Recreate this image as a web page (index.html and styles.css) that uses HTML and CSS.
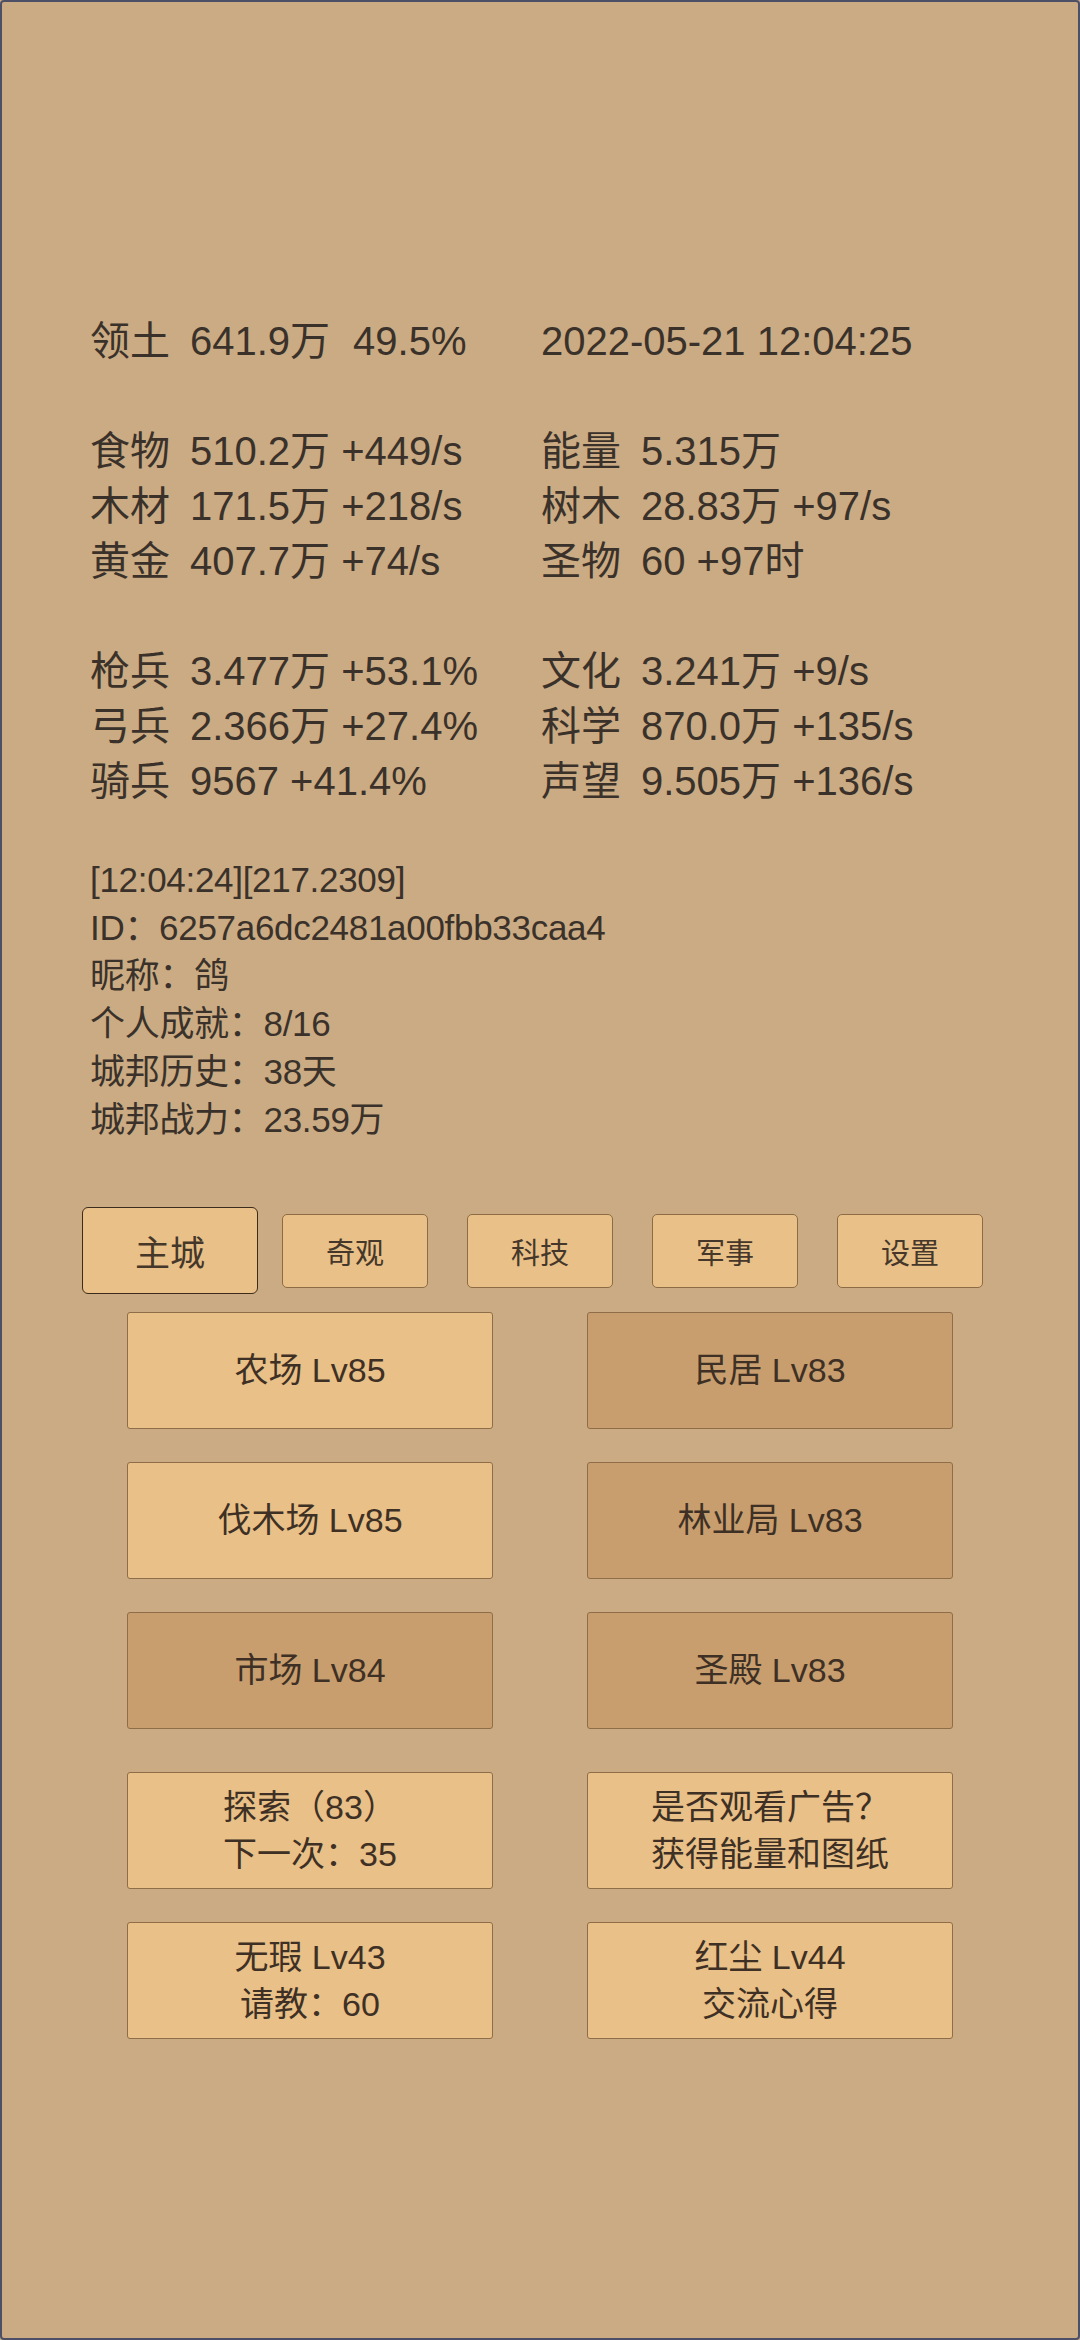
FILE: index.html
```html
<!DOCTYPE html>
<html lang="zh-CN">
<head>
    <meta charset="UTF-8">
    <meta name="viewport" content="width=device-width, initial-scale=1.0">
    <title>城邦</title>
    <link rel="stylesheet" href="styles.css">
</head>
<body>
    <div class="screen">
        <div class="stats">
            <div class="stats-group">
                <div class="stat"><span class="label">领土</span>641.9万<span class="gap"></span>49.5%</div>
                <div class="stat">2022-05-21 12:04:25</div>
            </div>
            <div class="stats-group">
                <div class="stat"><span class="label">食物</span>510.2万 +449/s</div>
                <div class="stat"><span class="label">能量</span>5.315万</div>
                <div class="stat"><span class="label">木材</span>171.5万 +218/s</div>
                <div class="stat"><span class="label">树木</span>28.83万 +97/s</div>
                <div class="stat"><span class="label">黄金</span>407.7万 +74/s</div>
                <div class="stat"><span class="label">圣物</span>60 +97时</div>
            </div>
            <div class="stats-group">
                <div class="stat"><span class="label">枪兵</span>3.477万 +53.1%</div>
                <div class="stat"><span class="label">文化</span>3.241万 +9/s</div>
                <div class="stat"><span class="label">弓兵</span>2.366万 +27.4%</div>
                <div class="stat"><span class="label">科学</span>870.0万 +135/s</div>
                <div class="stat"><span class="label">骑兵</span>9567 +41.4%</div>
                <div class="stat"><span class="label">声望</span>9.505万 +136/s</div>
            </div>
        </div>

        <div class="info">
            <div>[12:04:24][217.2309]</div>
            <div>ID：6257a6dc2481a00fbb33caa4</div>
            <div>昵称：鸽</div>
            <div>个人成就：8/16</div>
            <div>城邦历史：38天</div>
            <div>城邦战力：23.59万</div>
        </div>

        <div class="tabs">
            <div class="tab-cell"><button class="tab active">主城</button></div>
            <div class="tab-cell"><button class="tab">奇观</button></div>
            <div class="tab-cell"><button class="tab">科技</button></div>
            <div class="tab-cell"><button class="tab">军事</button></div>
            <div class="tab-cell"><button class="tab">设置</button></div>
        </div>

        <div class="buildings">
            <button class="btn">农场 Lv85</button>
            <button class="btn dark">民居 Lv83</button>
            <button class="btn">伐木场 Lv85</button>
            <button class="btn dark">林业局 Lv83</button>
            <button class="btn dark">市场 Lv84</button>
            <button class="btn dark">圣殿 Lv83</button>
        </div>

        <div class="buildings extra">
            <button class="btn">探索（83）<br>下一次：35</button>
            <button class="btn">是否观看广告？<br>获得能量和图纸</button>
            <button class="btn">无瑕 Lv43<br>请教：60</button>
            <button class="btn">红尘 Lv44<br>交流心得</button>
        </div>
    </div>
</body>
</html>
```

FILE: styles.css
```css
html, body {
    margin: 0;
    padding: 0;
}
body {
    background-color: #cbab83;
    font-family: "Liberation Sans", "Noto Sans CJK SC", sans-serif;
    color: #3a322a;
}
.screen {
    box-sizing: border-box;
    width: 1080px;
    height: 2340px;
    border: 2px solid #4c4f66;
    border-radius: 4px;
    padding-top: 312px;
}
.stats {
    padding-left: 88px;
    font-size: 40px;
}
.stats-group {
    display: grid;
    grid-template-columns: 451px auto;
    line-height: 55px;
}
.stats-group + .stats-group {
    margin-top: 55px;
}
.stat {
    white-space: nowrap;
}
.label {
    display: inline-block;
    width: 80px;
    margin-right: 20px;
}
.gap {
    display: inline-block;
    width: 23px;
}
.info {
    margin-top: 47px;
    padding-left: 88px;
    font-size: 35px;
    line-height: 48px;
    letter-spacing: -0.3px;
}
.tabs {
    margin-top: 63px;
    display: grid;
    grid-template-columns: repeat(5, 185px);
    justify-content: center;
    height: 87px;
}
.tab-cell {
    display: flex;
    align-items: center;
    justify-content: center;
}
.tab {
    width: 146px;
    height: 74px;
    padding: 0;
    font-family: inherit;
    font-size: 29px;
    color: #45372a;
    background-color: #e9c087;
    border: 1px solid #8c6b45;
    border-radius: 5px;
}
.tab.active {
    width: 176px;
    height: 87px;
    font-size: 35px;
    border-color: #3b2c1e;
    border-radius: 6px;
}
.buildings {
    margin-top: 18px;
    display: grid;
    grid-template-columns: 460px 460px;
    justify-content: center;
    justify-items: center;
    row-gap: 33px;
}
.buildings.extra {
    margin-top: 43px;
}
.btn {
    width: 366px;
    height: 117px;
    padding: 0;
    font-family: inherit;
    font-size: 34px;
    line-height: 47px;
    color: #3e3024;
    background-color: #e9c087;
    border: 1px solid #8e6d48;
    border-radius: 3px;
}
.btn.dark {
    background-color: #c89e6e;
}
```
